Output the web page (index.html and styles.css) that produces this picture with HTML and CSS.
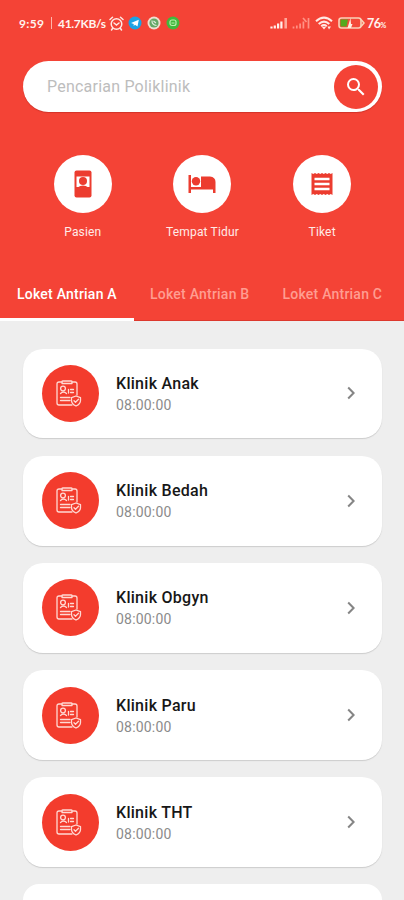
FILE: index.html
```
<!DOCTYPE html>
<html lang="id">
<head>
<meta charset="utf-8">
<meta name="viewport" content="width=device-width">
<title>Antrian Poliklinik</title>
<link rel="stylesheet" href="styles.css">
</head>
<body>
<svg class="defs" width="0" height="0">
  <symbol id="clip" viewBox="0 0 26 28">
    <g fill="none" stroke="#ffd9d3" stroke-width="1.3" stroke-linecap="round" stroke-linejoin="round">
      <path d="M6 3H3Q1 3 1 5V24Q1 26 3 26H16M16 3H19Q21 3 21 5V16"/>
      <path d="M6 4.500V2.500Q6 2 7 2H15Q16 2 16 2.500V4.500Z"/>
      <circle cx="7" cy="9.500" r="2.400"/>
      <path d="M4.500 14.500Q7.500 11.500 10.500 14.500M12.500 10.500V14M14.500 10.500H17.500M14.500 13.500H17.500M4.500 18.500H14M4.500 21.500H14"/>
      <path d="M20 17L24.500 18.700V21.500Q24.500 25 20 27Q15.500 25 15.500 21.500V18.700ZM18 21.800L19.500 23.300L22.500 20.300"/>
    </g>
  </symbol>
  <symbol id="chevron" viewBox="0 0 8 14"><path d="M1.200 1.500L6.600 7L1.200 12.500" fill="none" stroke="#858585" stroke-width="2"/></symbol>
</svg>
<header class="header">
  <div class="status">
    <span class="clock">9:59</span><span class="bar"></span><span class="rate">41.7KB/s</span>
    <svg class="alarm" viewBox="0 0 15 15"><g fill="none" stroke="#ffe9e4" stroke-width="1.500" stroke-linecap="round"><circle cx="7.500" cy="8" r="5.300"/><path d="M1 3.500L3.500 1.300M14 3.500L11.500 1.300M5 7L7.500 9L10 7M3.500 12.500L2.500 14M11.500 12.500L12.500 14"/></g></svg>
    <svg class="app" viewBox="0 0 14 14"><circle cx="7" cy="7" r="6.500" fill="#1ba2e4"/><path d="M3 7L10.800 3.800L9.500 10.500L7 8.800L5.700 10V8Z" fill="#fff"/></svg>
    <svg class="app" viewBox="0 0 14 14"><circle cx="7" cy="7" r="6.500" fill="#f0ded0"/><circle cx="7" cy="7" r="4.600" fill="#65a866"/><path d="M5 4.500Q4.700 8.800 9.500 9.500M6.500 5L9 7" fill="none" stroke="#e5eee0" stroke-width="1.100"/></svg>
    <svg class="app" viewBox="0 0 14 14"><circle cx="7" cy="7" r="6.500" fill="#42b83c"/><rect x="4" y="4" width="6" height="5.500" rx="2" fill="none" stroke="#b9efac" stroke-width="1.200"/><path d="M5.500 7H8.500" stroke="#b9efac"/></svg>
    <svg class="signal" viewBox="0 0 18 12"><path d="M1.500 11.500V9.500M4.800 11.500V8.500M8.100 11.500V6.500M11.400 11.500V4.500" stroke="#fff1ed" stroke-width="2.200"/><path d="M15.700 11.500V1" stroke="#ffa79a" stroke-width="2.600"/></svg>
    <svg class="signal second" viewBox="0 0 18 12"><path d="M1.500 11.500V9.500M4.800 11.500V8.500M8.100 11.500V6.500M11.400 11.500V4.500M16.500 11.500V1M11 1L14.500 5" stroke="#ff9285" stroke-width="1.700"/></svg>
    <svg class="wifi" viewBox="0 0 18 14"><g fill="none" stroke="#ffe9e4" stroke-width="2"><path d="M1 5.200Q9-2 17 5.200M3.700 8Q9 3.200 14.300 8"/><path d="M6.200 10.300Q9 8 11.800 10.300"/></g><path d="M7 11L9 13.500L11 11ZM12.500 10.500H16L14 13.500Z" fill="#ffe9e4"/></svg>
    <svg class="battery" viewBox="0 0 27 12"><rect x="1" y="1" width="22" height="10" rx="2.500" fill="#f34a38" stroke="#f9d2b8" stroke-width="1.600"/><path d="M2.500 2.500H10L8.500 9.500H2.500Z" fill="#55a91e"/><path d="M12.500 1L9.500 11H13L14.500 7H13Z" fill="#fff0df"/><path d="M23 2.500L26 6L23 9.500" fill="none" stroke="#f9d2b8" stroke-width="1.600"/></svg>
    <span class="level">76<small>%</small></span>
  </div>
  <div class="search">
    <span>Pencarian Poliklinik</span>
    <div class="go"><svg viewBox="0 0 24 24"><path fill="#fff" d="M15.500 14h-.79l-.28-.27A6.471 6.471 0 0 0 16 9.500 6.500 6.500 0 1 0 9.500 16c1.610 0 3.090-.59 4.230-1.570l.27.28v.79l5 4.990L20.490 19l-4.990-5zm-6 0C7.010 14 5 11.990 5 9.500S7.010 5 9.500 5 14 7.010 14 9.500 11.990 14 9.500 14z"/></svg></div>
  </div>
  <nav class="menu">
    <div class="entry"><div class="disc"><svg width="18" height="28" viewBox="0 0 18 28"><rect x=".5" y=".5" width="17" height="27" rx="2" fill="#ec3c2f"/><path d="M2.500 6.500H15.500V17H2.500Z" fill="#fff"/><circle cx="9" cy="11" r="4" fill="#ec3c2f"/><path d="M3.500 17.500Q9 13.500 14.500 17.500Z" fill="#ec3c2f"/></svg></div><span>Pasien</span></div>
    <div class="entry"><div class="disc"><svg width="28" height="20" viewBox="0 0 28 20"><path d="M.5 1H3V13H13V2.500H22Q27.500 3 27.500 8V19H25V15.500H3V19H.5Z" fill="#ec3c2f"/><circle cx="8" cy="7.300" r="4.200" fill="#ec3c2f"/></svg></div><span>Tempat Tidur</span></div>
    <div class="entry"><div class="disc"><svg width="22" height="24" viewBox="0 0 22 24"><path d="M.5 1L2.250 2L4 1L5.750 2L7.500 1L9.250 2L11 1L12.750 2L14.500 1L16.250 2L18 1L19.750 2L21.500 1V23L19.750 22L18 23L16.250 22L14.500 23L12.750 22L11 23L9.250 22L7.500 23L5.750 22L4 23L2.250 22L.5 23Z" fill="#ec3c2f"/><path d="M3.500 7H18.500M3.500 12H18.500M3.500 17H18.500" stroke="#fff" stroke-width="2.400"/></svg></div><span>Tiket</span></div>
  </nav>
  <div class="tabs"><div class="tab active">Loket Antrian A</div><div class="tab">Loket Antrian B</div><div class="tab">Loket Antrian C</div></div>
</header>
<main class="list">
  <article class="card"><div class="badge"><svg><use href="#clip"/></svg></div><div class="info"><h2>Klinik Anak</h2><p>08:00:00</p></div><svg class="next"><use href="#chevron"/></svg></article>
  <article class="card"><div class="badge"><svg><use href="#clip"/></svg></div><div class="info"><h2>Klinik Bedah</h2><p>08:00:00</p></div><svg class="next"><use href="#chevron"/></svg></article>
  <article class="card"><div class="badge"><svg><use href="#clip"/></svg></div><div class="info"><h2>Klinik Obgyn</h2><p>08:00:00</p></div><svg class="next"><use href="#chevron"/></svg></article>
  <article class="card"><div class="badge"><svg><use href="#clip"/></svg></div><div class="info"><h2>Klinik Paru</h2><p>08:00:00</p></div><svg class="next"><use href="#chevron"/></svg></article>
  <article class="card"><div class="badge"><svg><use href="#clip"/></svg></div><div class="info"><h2>Klinik THT</h2><p>08:00:00</p></div><svg class="next"><use href="#chevron"/></svg></article>
  <article class="card last"></article>
</main>
</body>
</html>
```
FILE: styles.css
```
* { box-sizing: border-box; }
body { margin: 0; height: 900px; overflow: hidden; background: #eee; font-family: Roboto, sans-serif; }
.defs { display: none; }
svg { display: block; flex: none; }
.header { height: 321px; background: #f44336; color: #fff; display: flex; flex-direction: column; }
.status { height: 46px; flex: none; padding: 0 18px 0 19px; display: flex; align-items: center; font: 700 12px Lato, sans-serif; color: #fff3ef; white-space: nowrap; }
.clock { width: 32px; letter-spacing: .3px; }
.bar { width: 1px; height: 12px; background: #ffb5aa; margin-right: 6px; }
.rate { width: 51px; letter-spacing: -.3px; }
.alarm { width: 15px; height: 15px; margin-right: 4px; }
.app { width: 14px; height: 14px; margin-right: 5px; }
.signal { width: 18px; height: 12px; margin-left: auto; }
.second { margin-left: 4px; }
.wifi { width: 18px; height: 14px; margin-left: 5px; }
.battery { width: 27px; height: 12px; margin: 0 2px 0 5px; }
.level { width: 19px; font-size: 12.5px; letter-spacing: -.5px; }
.level small { font-size: 7px; }
.search { height: 51px; flex: none; margin: 15px 22px 0 23px; padding: 0 4px 0 24px; border-radius: 26px; background: #fff; display: flex; align-items: center; justify-content: space-between; color: #bdbdbd; font-size: 16px; letter-spacing: .22px; box-shadow: 0 1px 1px #d3342a; }
.go { width: 44px; height: 44px; border-radius: 50%; background: #f44336; display: grid; place-items: center; }
.go svg { width: 24px; height: 24px; }
.menu { margin: 43px 22px 0 23px; display: grid; grid-template-columns: repeat(3, 1fr); }
.entry { display: flex; flex-direction: column; align-items: center; gap: 12px; font-size: 12px; line-height: 14px; letter-spacing: .17px; color: #ffebe8; }
.disc { width: 58px; height: 58px; border-radius: 50%; background: #fff; display: grid; place-items: center; }
.tabs { margin-top: auto; height: 52px; display: flex; border-bottom: 1px solid #dc382d; }
.tab { width: 132.500px; flex: none; padding-left: 16.500px; font-size: 14px; font-weight: 500; letter-spacing: .22px; line-height: 51px; color: #ff9d91; white-space: nowrap; }
.active { width: 133.500px; padding-left: 17px; color: #fff; height: 52px; border-bottom: 3px solid #fff; }
.list { height: 579px; overflow: hidden; padding: 27.500px 22px 0 23px; display: flex; flex-direction: column; gap: 17.300px; }
.card { height: 89.900px; flex: none; border-radius: 20px; background: #fff; box-shadow: 0 1px 1px #ccc; padding: 0 27px 0 19px; display: flex; align-items: center; }
.last { height: 16px; border-radius: 20px 20px 0 0; box-shadow: none; }
.badge { width: 57px; height: 57px; border-radius: 50%; background: #f33c2d; display: grid; place-items: center; margin-right: 17px; }
.badge svg { width: 26px; height: 28px; margin: -1px 0 0 -3px; }
.info { flex: 1; padding-top: 2px; }
h2 { margin: 0; font-size: 16px; font-weight: 500; letter-spacing: .28px; line-height: 21px; color: #171717; }
p { margin: 0; font-size: 14px; letter-spacing: .2px; line-height: 22px; color: #8b8b8b; }
.next { width: 8px; height: 14px; }
```
